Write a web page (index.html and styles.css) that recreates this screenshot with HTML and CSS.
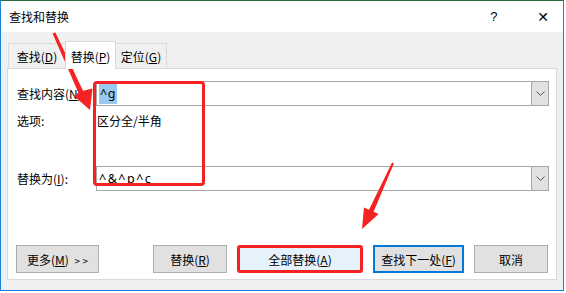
FILE: index.html
```html
<!DOCTYPE html>
<html lang="zh-CN">
<head>
    <meta charset="UTF-8">
    <title>查找和替换</title>
    <link rel="stylesheet" href="styles.css">
</head>
<body>
    <div class="dialog">
        <div class="titlebar">
            <span class="title">查找和替换</span>
            <span class="help">?</span>
            <span class="close">✕</span>
        </div>

        <div class="body">
            <div class="tabs">
                <div class="tab">查找(<u>D</u>)</div>
                <div class="tab active">替换(<u>P</u>)</div>
                <div class="tab">定位(<u>G</u>)</div>
            </div>

            <div class="panel">
                <div class="row find-row">
                    <label class="label">查找内容(<u>N</u>):</label>
                    <div class="combo">
                        <span class="value"><span class="selected">^g</span></span>
                        <span class="drop"><svg width="9" height="5" viewBox="0 0 9 5"><path d="M0.5 0.5 L4.5 4.5 L8.5 0.5" fill="none" stroke="#555" stroke-width="1"/></svg></span>
                    </div>
                </div>

                <div class="row options-row">
                    <span class="label">选项:</span>
                    <span class="options">区分全/半角</span>
                </div>

                <div class="row replace-row">
                    <label class="label">替换为(<u>I</u>):</label>
                    <div class="combo">
                        <span class="value spaced">^&amp;^p^c</span>
                        <span class="drop"><svg width="9" height="5" viewBox="0 0 9 5"><path d="M0.5 0.5 L4.5 4.5 L8.5 0.5" fill="none" stroke="#555" stroke-width="1"/></svg></span>
                    </div>
                </div>

                <div class="buttons">
                    <button class="btn more">更多(<u>M</u>) <span class="chev">&gt; &gt;</span></button>
                    <button class="btn replace">替换(<u>R</u>)</button>
                    <button class="btn replace-all">全部替换(<u>A</u>)</button>
                    <button class="btn find-next">查找下一处(<u>F</u>)</button>
                    <button class="btn cancel">取消</button>
                </div>
            </div>
        </div>
    </div>

    <!-- annotations drawn over the dialog -->
    <div class="mark-box"></div>
    <svg class="arrows" width="566" height="293" viewBox="0 0 566 293">
        <polygon fill="#f42222" points="55.4,32.6 83,90.8 92.5,88.5 90,110 74,96 78.4,92.8 52.6,33.4"/>
        <polygon fill="#f42222" points="393.9,163.4 373.6,211.8 378.6,214.1 362,229 364,207.5 369,209.8 392.1,162.6"/>
    </svg>
</body>
</html>
```

FILE: styles.css
```css
body {
    margin: 0;
    width: 566px;
    height: 293px;
    background-color: #fff;
    font-family: "Noto Sans CJK SC", "Noto Sans", sans-serif;
    font-size: 12px;
    color: #000;
    position: relative;
    overflow: hidden;
}
u {
    text-decoration: underline;
    text-underline-offset: 1px;
}
.dialog {
    box-sizing: border-box;
    width: 564px;
    height: 291px;
    display: flex;
    flex-direction: column;
    border: 1px solid #1883d7;
    border-top: 1px solid #2b6b3f;
}
.titlebar {
    height: 31px;
    display: flex;
    align-items: center;
    background-color: #fff;
    padding-left: 8px;
}
.title {
    flex: 1;
    font-size: 12px;
}
.help {
    font-family: "Liberation Sans", sans-serif;
    font-size: 13px;
    width: 14px;
    margin-right: 33px;
}
.close {
    font-family: "DejaVu Sans", sans-serif;
    font-size: 14px;
    margin-right: 14px;
}
.body {
    flex: 1;
    background-color: #f0f0f0;
    padding: 9px 6px 10px 6px;
    display: flex;
    flex-direction: column;
}
.tabs {
    display: flex;
    align-items: flex-end;
    height: 27px;
    padding-left: 1px;
}
.tab {
    box-sizing: border-box;
    height: 25px;
    width: 58px;
    padding: 0;
    border: 1px solid #d9d9d9;
    border-bottom: none;
    background-color: #f0f0f0;
    display: flex;
    align-items: center;
    justify-content: center;
    white-space: nowrap;
    margin-right: -1px;
}
.tab.active {
    height: 28px;
    width: 51px;
    background-color: #fff;
    position: relative;
    z-index: 1;
    margin-bottom: -1px;
    padding-top: 1px;
}
.tab:last-child {
    width: 52px;
}
.panel {
    flex: 1;
    background-color: #fff;
    border: 1px solid #d9d9d9;
    padding: 12px 7px 0 8px;
    display: flex;
    flex-direction: column;
}
.row {
    display: flex;
    align-items: center;
}
.label {
    width: 79px;
    flex-shrink: 0;
    padding-left: 1px;
    white-space: nowrap;
    overflow: hidden;
}
.find-row,
.replace-row {
    height: 25px;
}
.options-row {
    margin-top: 6px;
    height: 17px;
}
.replace-row {
    margin-top: 37px;
}
.options {
    padding-left: 1px;
}
.combo {
    flex: 1;
    box-sizing: border-box;
    height: 25px;
    border: 1px solid #a8a8a8;
    display: flex;
    align-items: center;
}
.value {
    flex: 1;
    padding-left: 2px;
    font-family: "Noto Sans", sans-serif;
    font-size: 12.5px;
    letter-spacing: 0.5px;
}
.value.spaced {
    letter-spacing: 1.5px;
}
.selected {
    background-color: #99c9ef;
    padding: 1px 1px 2px 1px;
}
.drop {
    box-sizing: border-box;
    width: 17px;
    height: 23px;
    background-color: #e1e1e1;
    border-left: 1px solid #a8a8a8;
    display: flex;
    align-items: center;
    justify-content: center;
}
.buttons {
    display: flex;
    margin-top: 54px;
    padding-left: 0;
}
.btn {
    box-sizing: border-box;
    height: 28px;
    border: 1px solid #adadad;
    background-color: #e1e1e1;
    font-family: "Noto Sans CJK SC", "Noto Sans", sans-serif;
    font-size: 12px;
    color: #000;
    padding: 0;
}
.chev {
    font-size: 10px;
    margin-left: 3px;
}
.more {
    width: 83px;
}
.replace {
    width: 74px;
    margin-left: 54px;
}
.replace-all {
    width: 126px;
    margin-left: 10px;
    background-color: #e5f1fb;
    border: 3px solid #f42222;
    border-radius: 3px;
}
.find-next {
    width: 91px;
    margin-left: 10px;
    border: 2px solid #0078d7;
}
.cancel {
    width: 74px;
    margin-left: 10px;
}
.mark-box {
    position: absolute;
    left: 93px;
    top: 81px;
    width: 112px;
    height: 105px;
    box-sizing: border-box;
    border: 3px solid #f42222;
    border-radius: 4px;
}
.arrows {
    position: absolute;
    left: 0;
    top: 0;
    pointer-events: none;
}
```
